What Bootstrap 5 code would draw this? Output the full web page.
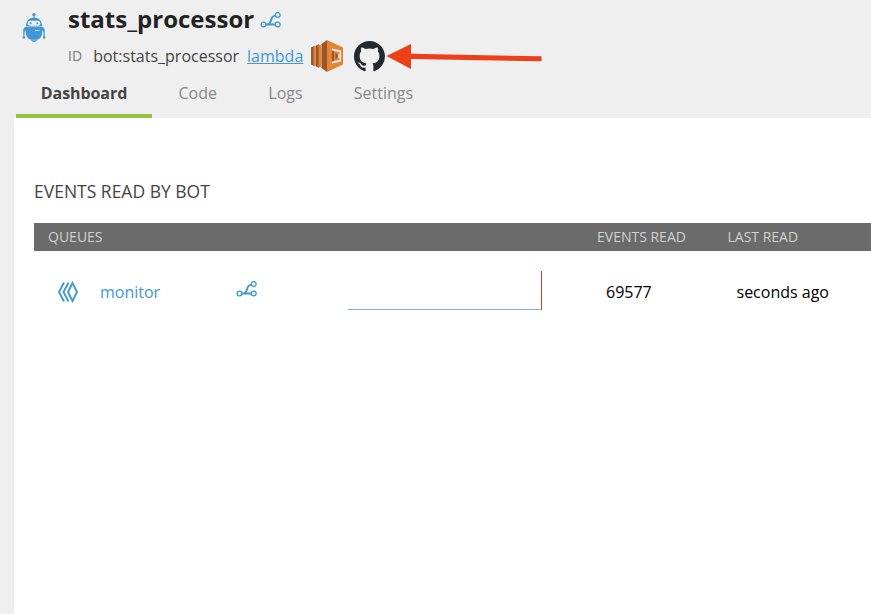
<!DOCTYPE html>
<html lang="en">
<head>
<meta charset="utf-8">
<meta name="viewport" content="width=device-width, initial-scale=1">
<title>stats_processor</title>
<link href="https://cdn.jsdelivr.net/npm/bootstrap@5.3.0/dist/css/bootstrap.min.css" rel="stylesheet">
<style>
body{background:#efefef;font-family:"Open Sans","Noto Sans",sans-serif;font-size:16px;line-height:24px;height:100vh;overflow:hidden}
svg{display:block;flex:none}
a{color:#4198d5}
.bot-head{height:76px;padding-left:21px}
.bot-icon{margin:12px 22px 0 0}
.bot-title{font-size:24px;line-height:32px;font-weight:700;color:#222;margin:3px 6px 0 0}
.bot-meta{height:34px;margin-top:4px;color:#444}
.id-label{font-size:14px;color:#777;width:25.2px}
.lambda-icon{margin-left:8px}
.github-icon{margin:0 .5px 0 10.5px}
.bot-tabs{height:42px;padding-left:16px}
.bot-tabs .nav-link{padding:5px 0 0;height:42px;color:#888;border:0;border-radius:0;text-align:center}
.bot-tabs .nav-link.active{color:#444;font-weight:700;border-bottom:4px solid #97bf41;background:none;letter-spacing:-.08px}
.tab-dash{width:136px}.tab-code{width:91.5px}.tab-logs{width:84px}.tab-settings{width:112px}
.panel{margin-left:14px;padding:60px 0 0 20px;height:496px}
.section-title{font-size:17.5px;line-height:26px;color:#444;font-weight:400;margin:0 0 19px}
.queue-head{background:#6b6b6b;color:#d0d0d0;height:28px;font-size:14px;padding-left:14px}
.queue-row{height:82px;color:#000;padding-left:23px}
.h-queues{width:549px}.h-events{width:130.5px}
.q-icon{width:43px}.q-name{width:136px}.q-flow{width:111px;padding-bottom:6px}.q-chart{width:259px;padding-bottom:4px}.q-events{width:130.5px}
</style>
</head>
<body>
<svg width="0" height="0" class="position-absolute" aria-hidden="true">
  <symbol id="flow" viewBox="0 0 22 16">
    <g fill="none" stroke="#4198d5" stroke-width="1.3">
      <circle cx="3.500" cy="12.500" r="2.400"/><circle cx="17.700" cy="12.500" r="2.400"/><circle cx="17.700" cy="3" r="2.400"/>
      <path d="M6 12.500H15.300M7.500 12.400C12.700 11.600 9.300 4.200 15.300 3.600" stroke-width="1.9"/>
    </g>
  </symbol>
</svg>
<header>
  <div class="bot-head d-flex">
    <svg class="bot-icon" width="25" height="31" viewBox="0 0 25 31">
      <g fill="#4198d5">
        <circle cx="13" cy="2.600" r="1.700"/><path d="M12.500 3h1v4h-1z"/>
        <path d="M5 14.500C5 8.500 8.400 5.500 13 5.500S21 8.500 21 14.500z"/>
        <path d="M4.700 15.100H21.300V20C21.300 24.500 18.500 27 16.500 27.700H9.500C7.500 27 4.700 24.500 4.700 20z"/>
        <path d="M9.500 28.200h7Q15 30 13 30T9.500 28.200z"/>
        <path d="M5 15Q2.300 15.300 2.300 18v7h1.200v-5L5 18zM21 15q2.700.3 2.700 3v7h-1.200v-5L21 18z"/>
        <circle cx="2.800" cy="25.500" r="1.300"/><circle cx="23.200" cy="25.500" r="1.300"/>
      </g>
      <rect x="6.800" y="8.800" width="12.400" height="5" rx="2.500" fill="#efefef"/>
      <circle cx="9.700" cy="11.300" r="1" fill="#4198d5"/><circle cx="16.300" cy="11.300" r="1" fill="#4198d5"/>
      <path d="M14 18.500h4.500" stroke="#efefef" stroke-width="1" stroke-dasharray="1.200 .5"/>
    </svg>
    <div>
      <div class="d-flex align-items-start">
        <h1 class="bot-title">stats_processor</h1>
        <svg class="mt-2 pt-1" width="22" height="20"><use href="#flow" width="22" height="16"/></svg>
      </div>
      <div class="bot-meta d-flex align-items-center">
        <span class="id-label">ID</span><span>bot:stats_processor</span>
        <a class="ms-2" href="#">lambda</a>
        <svg class="lambda-icon" width="32" height="32" viewBox="0 0 32 32">
          <path fill="#99552b" d="M0 7.500l3-1.500v20l-3-1.500zM4.500 6l3.500-2v24l-3.500-2zM10.500 4L16 0v32l-5.500-4z"/>
          <path fill="#e48437" d="M2.500 6h2v20h-2zM7.500 4.500l3 1v21l-3 1zM16 0l16 7.500v17L16 32z"/>
          <path fill="#efefef" d="M21 8.500l9 2v11l-9 2z"/>
          <path fill="#e48437" d="M23 11l5.500 1v8L23 21z"/>
          <path fill="#99552b" d="M21 10.500l2 .3v10.400l-2 .3zM24.500 12.500l3 3.500-3 3.500z"/>
          <path fill="#efefef" d="M27.300 14.500h1.300v3.200h-1.300z"/>
        </svg>
        <svg class="github-icon" width="31" height="31" viewBox="0 0 16 16"><path fill="#24292e" d="M8 0C3.580 0 0 3.580 0 8c0 3.540 2.290 6.530 5.470 7.590.4.070.55-.17.55-.38 0-.19-.01-.82-.01-1.490-2.010.37-2.530-.49-2.690-.94-.09-.23-.48-.94-.82-1.130-.28-.15-.68-.52-.01-.53.63-.01 1.080.58 1.230.82.72 1.210 1.870.87 2.330.66.070-.52.280-.87.510-1.070-1.780-.2-3.640-.89-3.640-3.950 0-.87.310-1.590.82-2.150-.08-.2-.36-1.020.08-2.120 0 0 .67-.21 2.200.82.64-.18 1.320-.27 2-.27s1.360.09 2 .27c1.530-1.040 2.200-.82 2.200-.82.44 1.100.16 1.920.08 2.120.51.56.82 1.270.82 2.150 0 3.070-1.870 3.750-3.650 3.950.29.25.54.73.54 1.480 0 1.070-.01 1.930-.01 2.200 0 .21.15.46.55.38A8 8 0 0 0 16 8c0-4.420-3.580-8-8-8z"/></svg>
        <svg width="158" height="28" viewBox="0 0 158 28"><path fill="#ed3f1a" d="M1.500 14L26 2v9.800L156.500 14.300v5L26 17V27z"/></svg>
      </div>
    </div>
  </div>
  <nav class="nav bot-tabs">
    <a class="nav-link active tab-dash" href="#">Dashboard</a>
    <a class="nav-link tab-code" href="#">Code</a>
    <a class="nav-link tab-logs" href="#">Logs</a>
    <a class="nav-link tab-settings" href="#">Settings</a>
  </nav>
</header>
<main class="panel bg-white">
  <h2 class="section-title">EVENTS READ BY BOT</h2>
  <div class="queue-head d-flex align-items-center">
    <span class="h-queues">QUEUES</span><span class="h-events">EVENTS READ</span><span>LAST READ</span>
  </div>
  <div class="queue-row d-flex align-items-center">
    <div class="q-icon"><svg width="22" height="22" viewBox="0 0 22 22"><g fill="none" stroke="#4198d5" stroke-width="1.900"><path d="M7 1.500L2 11l5 9.500M11.500 1.500L6.500 11l5 9.500M15.500 2L11 11l4.500 9L20 11z"/></g></svg></div>
    <a class="q-name text-decoration-none" href="#">monitor</a>
    <div class="q-flow"><svg width="22" height="16"><use href="#flow"/></svg></div>
    <div class="q-chart"><svg width="197" height="39"><path d="M.5 38.500H195" stroke="#82aedb"/><path d="M194.500 0V39" stroke="#e13d20"/></svg></div>
    <span class="q-events">69577</span><span>seconds ago</span>
  </div>
</main>
<script src="https://cdn.jsdelivr.net/npm/bootstrap@5.3.0/dist/js/bootstrap.bundle.min.js"></script>
</body>
</html>
